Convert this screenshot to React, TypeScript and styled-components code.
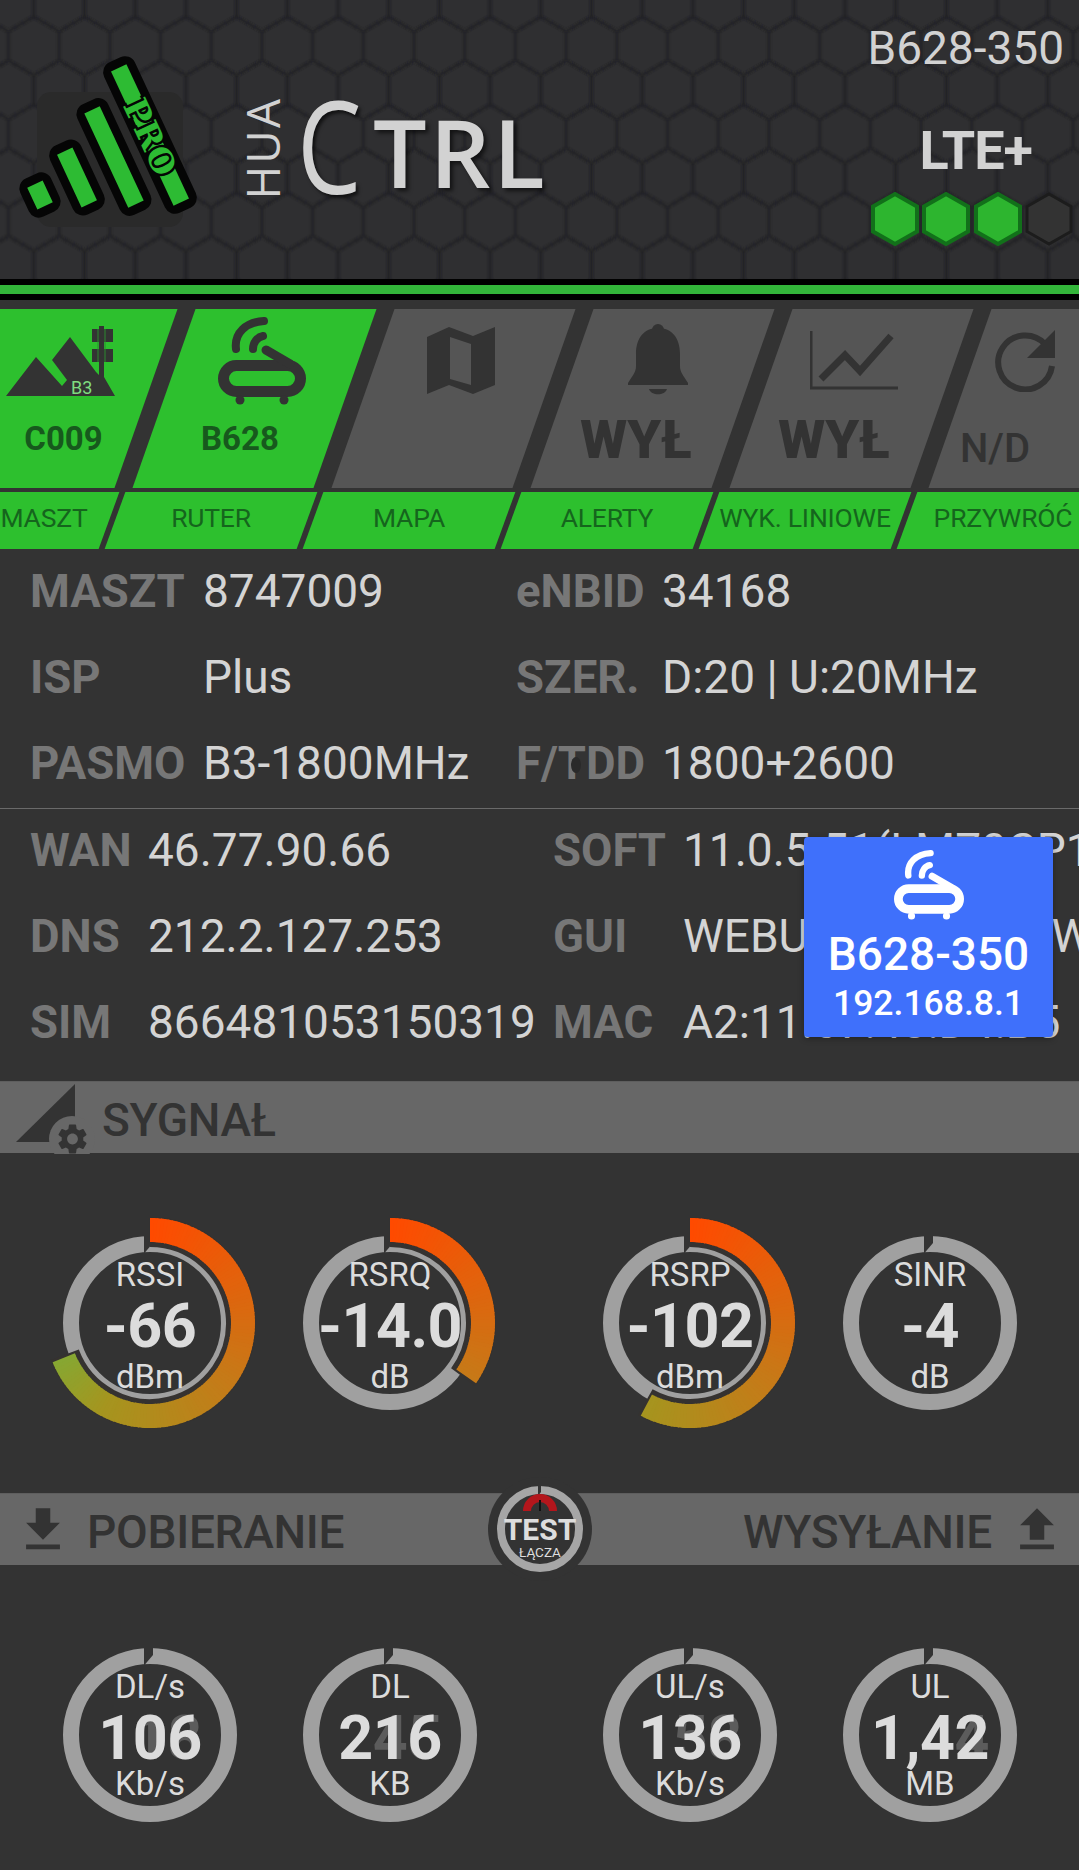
import React from "react"
import styled, { createGlobalStyle } from "styled-components"

const GlobalStyle = createGlobalStyle`
  html, body {
    margin: 0;
    padding: 0;
    background: #333333;
  }
  * {
    box-sizing: border-box;
  }
`

const GREEN = "#2dc02e"
const BG = "#333333"
const BAR = "#676767"

const Page = styled.div`
  position: relative;
  width: 1079px;
  height: 1870px;
  overflow: hidden;
  background: ${BG};
  font-family: Roboto, "Liberation Sans", sans-serif;
`

/* header */
const Header = styled.header`
  position: relative;
  height: 279px;
  display: flex;
  background: #2f2f31;
`

const HexTexture = styled.svg`
  position: absolute;
  inset: 0;
  width: 100%;
  height: 100%;
`

const LogoMark = styled.svg`
  position: relative;
  flex: none;
  width: 210px;
  height: 279px;
`

const Wordmark = styled.div`
  position: relative;
  display: flex;
  align-items: flex-end;
  height: 200px;
  margin-left: 33px;
  color: #d2d2d2;
  font-family: "Open Sans", sans-serif;
`

const Hua = styled.span`
  writing-mode: vertical-rl;
  transform: rotate(180deg);
  font-size: 46px;
  font-weight: 500;
  letter-spacing: 2px;
  line-height: 38px;
  width: 38px;
`

const BigC = styled.span`
  display: block;
  width: 76px;
  margin-left: 16px;
  font-size: 128px;
  font-weight: 400;
  line-height: 110px;
  transform: scaleX(0.8);
  transform-origin: left bottom;
  text-shadow: 3px 3px 4px rgba(0, 0, 0, 0.6);
`

const Trl = styled.span`
  font-size: 95px;
  font-weight: 600;
  line-height: 97px;
  letter-spacing: 3px;
  text-shadow: 3px 3px 4px rgba(0, 0, 0, 0.6);
`

const Status = styled.div`
  position: relative;
  margin-left: auto;
  width: 215px;
  display: flex;
  flex-direction: column;
  align-items: flex-end;
  color: #d2d2d2;
`

const Model = styled.div`
  margin-top: 23px;
  padding-right: 15px;
  font-size: 46px;
  line-height: 50px;
  white-space: nowrap;
`

const Network = styled.div`
  margin-top: 50px;
  padding-right: 47px;
  font-size: 54px;
  font-weight: 700;
  line-height: 56px;
  letter-spacing: -1px;
`

const Signal = styled.div`
  display: flex;
  gap: 3.5px;
  margin-top: 13px;
  padding-right: 6px;
`

const HeaderRule = styled.div`
  height: 21px;
  background: #000;
  padding-top: 6px;
  &::after {
    content: "";
    display: block;
    height: 9px;
    background: #33b53a;
  }
`

/* tiles */
const TileRow = styled.div`
  display: flex;
  gap: 18px;
  height: 179px;
  margin-top: 9px;
  overflow: hidden;
  > :first-child {
    margin-left: -35px;
  }
`

const Tile = styled.div<{ $on?: boolean }>`
  flex: none;
  width: 181px;
  height: 100%;
  transform: skewX(-19.4deg);
  background: ${(p) => (p.$on ? GREEN : "#555555")};
`

const TileFace = styled.div`
  height: 100%;
  transform: skewX(19.4deg);
  display: flex;
  flex-direction: column;
`

const shift = (s: number) => (s > 0 ? `padding-left: ${2 * s}px;` : `padding-right: ${-2 * s}px;`)

const TileIcon = styled.div<{ $x: number }>`
  height: 104px;
  display: flex;
  align-items: center;
  justify-content: center;
  ${(p) => shift(p.$x)}
`

const TileLabel = styled.div<{ $x: number; $kind: "name" | "off" | "na" }>`
  display: flex;
  justify-content: center;
  white-space: nowrap;
  ${(p) => shift(p.$x)}
  color: ${(p) => (p.$kind === "name" ? "#17591d" : "#333333")};
  font-size: ${(p) => (p.$kind === "name" ? 33 : p.$kind === "off" ? 54 : 40)}px;
  font-weight: ${(p) => (p.$kind === "off" ? 900 : p.$kind === "name" ? 700 : 500)};
  line-height: 54px;
  margin-top: ${(p) => (p.$kind === "name" ? -1 : p.$kind === "off" ? 0 : 9)}px;
`

const StripRow = styled.div`
  display: flex;
  gap: 6px;
  height: 57px;
  margin-top: 4px;
  overflow: hidden;
  > :first-child {
    margin-left: -83.5px;
  }
`

const StripCell = styled.div`
  flex: none;
  width: 192px;
  height: 100%;
  transform: skewX(-20deg);
  background: ${GREEN};
`

const StripText = styled.div<{ $x?: number }>`
  height: 100%;
  padding-bottom: 7px;
  transform: skewX(20deg);
  display: flex;
  align-items: center;
  justify-content: center;
  white-space: nowrap;
  color: #15651d;
  font-size: 26.5px;
  letter-spacing: -0.2px;
  ${(p) => (p.$x ? shift(p.$x) : "")}
`

/* info */
const InfoGrid = styled.div<{ $cols: string; $top: number }>`
  position: relative;
  display: grid;
  grid-template-columns: ${(p) => p.$cols};
  grid-auto-rows: 86px;
  margin-top: ${(p) => p.$top}px;
  padding-left: 30px;
  align-items: center;
  overflow: hidden;
  white-space: nowrap;
`

const Key = styled.span`
  position: relative;
  color: #777777;
  font-size: 45.5px;
  font-weight: 700;
`

const Val = styled.span`
  color: #d4d4d4;
  font-size: 46px;
`

const Blot = styled.i`
  position: absolute;
  left: 55px;
  top: 20px;
  width: 10px;
  height: 16px;
  border-radius: 50%;
  background: #2a2a2a;
`

const Rule = styled.div`
  height: 1px;
  margin-top: 2px;
  background: #6a6a6a;
`

const Toast = styled.div`
  position: absolute;
  left: 804px;
  top: 837px;
  width: 249px;
  height: 200px;
  padding-top: 13px;
  border-radius: 4px;
  background: #3f70fb;
  box-shadow: 0 2px 6px rgba(0, 0, 0, 0.3);
  color: #fff;
  font-weight: 500;
  display: flex;
  flex-direction: column;
  align-items: center;
`

const ToastName = styled.div`
  margin-top: 8px;
  font-size: 46px;
  line-height: 52px;
`

const ToastIp = styled.div`
  margin-top: 1px;
  font-size: 35.5px;
  line-height: 44px;
`

/* section bars */
const SectionBar = styled.div<{ $top: number }>`
  position: relative;
  height: 72px;
  margin-top: ${(p) => p.$top}px;
  padding: 0 25px 0 16px;
  display: flex;
  align-items: center;
  justify-content: space-between;
  background: ${BAR};
  border-top: 1px solid #5e5e5e;
  color: #333333;
`

const BarTitle = styled.span`
  display: flex;
  align-items: center;
  font-size: 46px;
  font-weight: 500;
  letter-spacing: -0.3px;
`

const BarLabel = styled.span`
  padding-top: 4px;
`

const SignalMark = styled.svg`
  flex: none;
  margin-right: -1px;
`

const DownIcon = styled.svg`
  width: 58px;
  height: 58px;
  margin: 0 15px 0 -2px;
  fill: #333333;
`

const UpIcon = styled.svg`
  width: 58px;
  height: 58px;
  margin: 0 -12px 0 16px;
  fill: #333333;
`

const TestButton = styled.div`
  position: absolute;
  left: 488px;
  top: -17px;
  width: 104px;
  height: 104px;
  display: flex;
  flex-direction: column;
  align-items: center;
  color: #dddddd;
`

const TestArt = styled.svg`
  position: absolute;
  inset: 0;
`

const TestTitle = styled.span`
  position: relative;
  margin-top: 39px;
  font-size: 30px;
  font-weight: 700;
  line-height: 28px;
`

const TestSub = styled.span`
  position: relative;
  margin-top: 1px;
  font-size: 13.5px;
  line-height: 14px;
`

/* gauges */
const GaugeRow = styled.div`
  display: flex;
  margin-top: 60px;
  padding-left: 40px;
  gap: 20px;
  > :nth-child(3) {
    margin-left: 60px;
  }
`

const GaugeBox = styled.div`
  position: relative;
  width: 220px;
  height: 220px;
  padding-top: 44px;
  display: flex;
  flex-direction: column;
  align-items: center;
  color: #dcdcdc;
`

const GaugeArt = styled.svg`
  position: absolute;
  inset: 0;
`

const GaugeLabel = styled.span<{ $down?: number }>`
  position: relative;
  font-size: 33px;
  line-height: 36px;
  margin-top: ${(p) => p.$down ?? 0}px;
`

const GaugeValue = styled.span`
  position: relative;
  margin-top: 4px;
  font-size: 61px;
  font-weight: 700;
  line-height: 58px;
  white-space: nowrap;
  letter-spacing: -0.5px;
`

const Ghost = styled.span`
  position: absolute;
  right: 0;
  top: 0;
  color: #5c5c5c;
`

const ValueText = styled.span`
  position: relative;
`

const polar = (r: number, deg: number, c = 110) => {
  const a = (deg * Math.PI) / 180
  return [c + r * Math.sin(a), c - r * Math.cos(a)]
}

const arcPath = (r: number, from: number, to: number, c = 110) => {
  const [x0, y0] = polar(r, from, c)
  const [x1, y1] = polar(r, to, c)
  return `M${x0} ${y0}A${r} ${r} 0 ${to - from > 180 ? 1 : 0} 1 ${x1} ${y1}`
}

const stops: [number, number[]][] = [
  [0, [255, 74, 0]],
  [125, [198, 122, 24]],
  [208, [165, 149, 31]],
  [248, [133, 168, 51]],
]

const arcColor = (deg: number) => {
  for (let i = 1; i < stops.length; i++) {
    if (deg <= stops[i][0]) {
      const [a, ca] = stops[i - 1]
      const [b, cb] = stops[i]
      const t = (deg - a) / (b - a)
      return `rgb(${ca.map((v, k) => Math.round(v + (cb[k] - v) * t)).join(",")})`
    }
  }
  return "rgb(133,168,51)"
}

type GaugeProps = {
  label: string
  value: string
  unit: string
  arc?: number
  ghost?: string
}

function Gauge({ label, value, unit, arc = 0, ghost }: GaugeProps) {
  const segments: number[] = []
  for (let d = 0; d < arc; d += 2) segments.push(d)
  return (
    <GaugeBox>
      <GaugeArt width="220" height="220" viewBox="0 0 220 220">
        <circle cx="110" cy="110" r="79" fill="none" stroke="#a0a0a0" strokeWidth="16" />
        <polygon points="104,20 113,20 113,30 104.5,40 104,40" fill={BG} />
        {arc > 0 && (
          <>
            <path d={arcPath(91, 0, arc + 1.5)} fill="none" stroke="#353230" strokeWidth="30" />
            {segments.map((d) => (
              <path
                key={d}
                d={arcPath(93, d, Math.min(d + 2.6, arc))}
                fill="none"
                stroke={arcColor(d)}
                strokeWidth="24"
              />
            ))}
          </>
        )}
      </GaugeArt>
      <GaugeLabel>{label}</GaugeLabel>
      <GaugeValue>
        {ghost && <Ghost>{ghost}</Ghost>}
        <ValueText>{value}</ValueText>
      </GaugeValue>
      <GaugeLabel $down={unit.startsWith("dB") ? 4 : -1}>{unit}</GaugeLabel>
    </GaugeBox>
  )
}

function RouterIcon({ color, width }: { color: string; width: number }) {
  return (
    <svg width={width} height={width} viewBox="0 0 88 88" fill="none" stroke={color}>
      <rect x="5.5" y="48.5" width="77" height="26" rx="13" strokeWidth="11" />
      <path d="M48 33L72 47" strokeWidth="9" strokeLinecap="round" />
      <path d="M18 32C16 16 28 5 46 4" strokeWidth="8" strokeLinecap="round" />
      <path d="M35 32C35 26 39 20 45 19" strokeWidth="8" strokeLinecap="round" />
      <circle cx="22" cy="83" r="4.5" fill={color} stroke="none" />
      <circle cx="66" cy="83" r="4.5" fill={color} stroke="none" />
    </svg>
  )
}

function MastIcon() {
  return (
    <svg width="109" height="72" viewBox="0 0 109 72">
      <path
        d="M0 71L30 32L56 61L61 55L46 35L64 12L90 47L93 50V1H98V52L109 71Z"
        fill="#333333"
      />
      <rect x="86" y="4" width="21" height="13" fill="#333333" />
      <rect x="86" y="24" width="21" height="13" fill="#333333" />
      <path d="M92 4V37M99 4V37" stroke="#2c8a30" strokeWidth="1" />
      <text x="65" y="69" fontSize="18" fill="#7fdc7f" fontFamily="Roboto, sans-serif">
        B3
      </text>
    </svg>
  )
}

function MapIcon() {
  return (
    <svg width="68" height="68" viewBox="0 0 68 68">
      <path
        fillRule="evenodd"
        d="M0 10L22 0L46 9L68 0V58L46 67L22 58L0 67ZM23 10V52L44 58V17Z"
        fill="#333333"
      />
    </svg>
  )
}

function BellIcon() {
  return (
    <svg width="60" height="74" viewBox="0 0 60 74" fill="#333333">
      <circle cx="30" cy="6" r="6" />
      <path d="M30 4C16 4 8 14 8 30V42C8 48 5 51 0 59V61H60V59C55 51 52 48 52 42V30C52 14 44 4 30 4Z" />
      <path d="M21 65H39C37 72 23 72 21 65Z" />
    </svg>
  )
}

function ChartIcon() {
  return (
    <svg width="88" height="60" viewBox="0 0 88 60" fill="none" stroke="#333333">
      <path d="M1 0V57H88" strokeWidth="3" />
      <path d="M11 48L35 24L50 40L81 5" strokeWidth="7" />
    </svg>
  )
}

function RefreshIcon() {
  return (
    <svg width="62" height="62" viewBox="0 0 62 62">
      <path d="M51 14A27 27 0 1 0 58 36" fill="none" stroke="#333333" strokeWidth="6" />
      <path d="M61 0V28H33Z" fill="#333333" />
    </svg>
  )
}

function SignalHex({ on }: { on: boolean }) {
  return (
    <svg width="48" height="54" viewBox="0 0 48 54">
      <polygon
        points="24,2 46,14.5 46,39.5 24,52 2,39.5 2,14.5"
        fill={on ? "#2db52f" : "#333333"}
        stroke={on ? "#12701a" : "#1c1c1c"}
        strokeWidth={on ? 4 : 3}
      />
    </svg>
  )
}

const logoBars = [
  { cx: 40, cy: 195, len: 24 },
  { cx: 77, cy: 177.5, len: 58 },
  { cx: 114, cy: 157, len: 104 },
  { cx: 150, cy: 135, len: 148 },
]

function Logo() {
  return (
    <LogoMark viewBox="0 0 210 279">
      <rect x="37" y="92" width="146" height="135" rx="14" fill="#2a2a2a" />
      {logoBars.map((b) => (
        <g key={b.cx} transform={`rotate(-25 ${b.cx} ${b.cy})`}>
          <rect
            x={b.cx - 17}
            y={b.cy - b.len / 2 - 9}
            width="34"
            height={b.len + 18}
            rx="11"
            fill="#050505"
          />
          <rect x={b.cx - 8.5} y={b.cy - b.len / 2} width="17" height={b.len} fill="#2dbb33" />
        </g>
      ))}
      <text
        transform="translate(150 137) rotate(65)"
        textAnchor="middle"
        dominantBaseline="central"
        fontFamily="'DejaVu Serif', serif"
        fontWeight="700"
        fontSize="33"
        fill="#2dbb33"
        stroke="#050505"
        strokeWidth="5"
        paintOrder="stroke"
      >
        PRO
      </text>
    </LogoMark>
  )
}

const tiles = [
  { on: true, icon: <MastIcon />, iconX: 4.5, text: "C009", kind: "name", x: 8 },
  { on: true, icon: <RouterIcon color="#333333" width={88} />, iconX: 7.5, text: "B628", kind: "name", x: -14.5 },
  { on: false, icon: <MapIcon />, iconX: 7.5, text: "", kind: "name", x: 0 },
  { on: false, icon: <BellIcon />, iconX: 5.5, text: "WYŁ", kind: "off", x: -16.5 },
  { on: false, icon: <ChartIcon />, iconX: 2.5, text: "WYŁ", kind: "off", x: -17.5 },
  { on: false, icon: <RefreshIcon />, iconX: -25.5, text: "N/D", kind: "na", x: -55.5 },
] as const

const strip = ["MASZT", "RUTER", "MAPA", "ALERTY", "WYK. LINIOWE", "PRZYWRÓĆ"]

function App() {
  return (
    <Page>
      <GlobalStyle />
      <Header>
        <HexTexture>
          <defs>
            <filter id="soft">
              <feGaussianBlur stdDeviation="0.9" />
            </filter>
            <pattern
              id="hex"
              width="50.7"
              height="87.8"
              patternUnits="userSpaceOnUse"
              patternTransform="translate(8.45 24.05)"
            >
              <path
                d="M25.35 -7.3L50.7 7.3V36.6L25.35 51.2L0 36.6V7.3ZM25.35 51.2V80.5L0 95.1M25.35 80.5L50.7 95.1"
                fill="none"
                stroke="#242425"
                strokeWidth="3"
                filter="url(#soft)"
              />
            </pattern>
          </defs>
          <rect width="100%" height="100%" fill="url(#hex)" />
        </HexTexture>
        <Logo />
        <Wordmark>
          <Hua>HUA</Hua>
          <BigC>C</BigC>
          <Trl>TRL</Trl>
        </Wordmark>
        <Status>
          <Model>B628-350</Model>
          <Network>LTE+</Network>
          <Signal>
            <SignalHex on />
            <SignalHex on />
            <SignalHex on />
            <SignalHex on={false} />
          </Signal>
        </Status>
      </Header>
      <HeaderRule />

      <TileRow>
        {tiles.map((t, i) => (
          <Tile key={i} $on={t.on}>
            <TileFace>
              <TileIcon $x={t.iconX}>{t.icon}</TileIcon>
              <TileLabel $x={t.x} $kind={t.kind}>
                {t.text}
              </TileLabel>
            </TileFace>
          </Tile>
        ))}
      </TileRow>

      <StripRow>
        {strip.map((s, i) => (
          <StripCell key={s}>
            <StripText $x={i === 0 ? 31 : 0}>{s}</StripText>
          </StripCell>
        ))}
      </StripRow>

      <InfoGrid $cols="173px 313px 146px 1fr" $top={-1}>
        <Key>MASZT</Key>
        <Val>8747009</Val>
        <Key>eNBID</Key>
        <Val>34168</Val>
        <Key>ISP</Key>
        <Val>Plus</Val>
        <Key>SZER.</Key>
        <Val>D:20 | U:20MHz</Val>
        <Key>PASMO</Key>
        <Val>B3-1800MHz</Val>
        <Key>
          F/TDD
          <Blot />
        </Key>
        <Val>1800+2600</Val>
      </InfoGrid>
      <Rule />
      <InfoGrid $cols="118px 405px 130px 1fr" $top={-2}>
        <Key>WAN</Key>
        <Val>46.77.90.66</Val>
        <Key>SOFT</Key>
        <Val>11.0.5.51(LM70CP1</Val>
        <Key>DNS</Key>
        <Val>212.2.127.253</Val>
        <Key>GUI</Key>
        <Val>WEBUI 11.0.3.12 (W</Val>
        <Key>SIM</Key>
        <Val>866481053150319</Val>
        <Key>MAC</Key>
        <Val>A2:11:67:48:D4:B5</Val>
      </InfoGrid>

      <SectionBar $top={16}>
        <BarTitle>
          <SignalMark width="87" height="72" viewBox="0 0 87 72">
            <path d="M0 60L59 2V60Z" fill="#333333" />
            <circle cx="56" cy="57" r="23" fill={BAR} />
            <path
              transform="translate(38.5 39) scale(1.5)"
              fill="#333333"
              d="M19.14 12.94c.04-.3.06-.61.06-.94 0-.32-.02-.64-.07-.94l2.03-1.58c.18-.14.23-.41.12-.61l-1.92-3.32c-.12-.22-.37-.29-.59-.22l-2.39.96c-.5-.38-1.03-.7-1.62-.94l-.36-2.54c-.04-.24-.24-.41-.48-.41h-3.84c-.24 0-.43.17-.47.41l-.36 2.54c-.59.24-1.13.57-1.62.94l-2.39-.96c-.22-.08-.47 0-.59.22L2.74 8.87c-.12.21-.08.47.12.61l2.03 1.58c-.05.3-.09.63-.09.94s.02.64.07.94l-2.03 1.58c-.18.14-.23.41-.12.61l1.92 3.32c.12.22.37.29.59.22l2.39-.96c.5.38 1.03.7 1.62.94l.36 2.54c.05.24.24.41.48.41h3.84c.24 0 .44-.17.47-.41l.36-2.54c.59-.24 1.13-.56 1.62-.94l2.39.96c.22.08.47 0 .59-.22l1.92-3.32c.12-.22.07-.47-.12-.61l-2.01-1.58zM12 15.6c-1.98 0-3.6-1.62-3.6-3.6s1.62-3.6 3.6-3.6 3.6 1.62 3.6 3.6-1.62 3.6-3.6 3.6z"
            />
          </SignalMark>
          <BarLabel>SYGNAŁ</BarLabel>
        </BarTitle>
      </SectionBar>

      <GaugeRow>
        <Gauge label="RSSI" value="-66" unit="dBm" arc={248} />
        <Gauge label="RSRQ" value="-14.0" unit="dB" arc={125} />
        <Gauge label="RSRP" value="-102" unit="dBm" arc={208} />
        <Gauge label="SINR" value="-4" unit="dB" />
      </GaugeRow>

      <SectionBar $top={60}>
        <BarTitle>
          <DownIcon viewBox="0 0 24 24">
            <path d="M19 9h-4V3H9v6H5l7 7 7-7zM5 18v2h14v-2H5z" />
          </DownIcon>
          <BarLabel>POBIERANIE</BarLabel>
        </BarTitle>
        <TestButton>
          <TestArt width="104" height="104" viewBox="0 0 104 104">
            <circle cx="52" cy="52" r="52" fill={BG} />
            <circle cx="52" cy="52" r="39" fill="none" stroke="#a6a6a6" strokeWidth="8" />
            <polygon points="50,8 53,8 53,15 50,19" fill={BG} />
            <path d="M39 34A13 13 0 0 1 65 34" fill="none" stroke="#b3161c" strokeWidth="8" />
            <path d="M52 23V34" stroke="#111" strokeWidth="2" />
          </TestArt>
          <TestTitle>TEST</TestTitle>
          <TestSub>ŁĄCZA</TestSub>
        </TestButton>
        <BarTitle>
          <BarLabel>WYSYŁANIE</BarLabel>
          <UpIcon viewBox="0 0 24 24">
            <path d="M9 16h6v-6h4l-7-7-7 7h4v6zM5 18h14v2H5v-2z" />
          </UpIcon>
        </BarTitle>
      </SectionBar>

      <GaugeRow>
        <Gauge label="DL/s" value="106" unit="Kb/s" ghost="18" />
        <Gauge label="DL" value="216" unit="KB" ghost="45" />
        <Gauge label="UL/s" value="136" unit="Kb/s" ghost="58" />
        <Gauge label="UL" value="1,42" unit="MB" ghost="4" />
      </GaugeRow>

      <Toast>
        <RouterIcon color="#ffffff" width={70} />
        <ToastName>B628-350</ToastName>
        <ToastIp>192.168.8.1</ToastIp>
      </Toast>
    </Page>
  )
}

export default App
